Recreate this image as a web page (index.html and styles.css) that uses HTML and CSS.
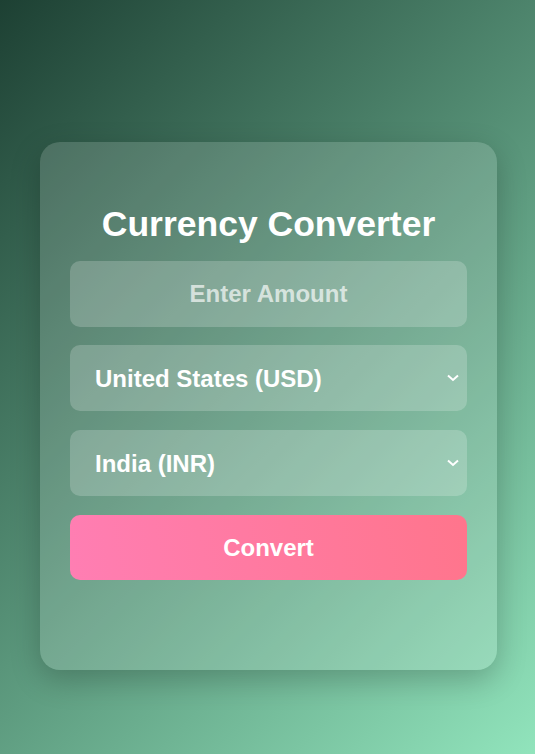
FILE: index.html
```html
<!DOCTYPE html>
<html lang="en">
<head>
<meta charset="utf-8">
<title>Currency Converter</title>
<link rel="stylesheet" href="styles.css">
</head>
<body>
<main class="card">
  <h2 class="title">Currency Converter</h2>
  <input class="field amount" type="text" inputmode="decimal" placeholder="Enter Amount">
  <div class="select-wrap first">
    <select class="field select">
      <option>United States (USD)</option>
    </select>
    <svg class="chevron" width="12" height="8" viewBox="0 0 12 8"><polyline points="1,1.5 6,6 11,1.5" fill="none" stroke="#fff" stroke-width="2"/></svg>
  </div>
  <div class="select-wrap">
    <select class="field select">
      <option>India (INR)</option>
    </select>
    <svg class="chevron" width="12" height="8" viewBox="0 0 12 8"><polyline points="1,1.5 6,6 11,1.5" fill="none" stroke="#fff" stroke-width="2"/></svg>
  </div>
  <button class="convert">Convert</button>
</main>
</body>
</html>
```

FILE: styles.css
```css
html, body {
  margin: 0;
  height: 100%;
}
body {
  font-family: "Liberation Sans", Arial, sans-serif;
  background: linear-gradient(135deg, #1d4033 0%, #91e4bc 100%);
  padding: 142px 38px 0 40px;
  box-sizing: border-box;
  overflow: hidden;
}
.card {
  box-sizing: border-box;
  width: 457px;
  height: 528px;
  padding: 62px 30px 0;
  background: rgba(255, 255, 255, 0.15);
  border-radius: 20px;
  box-shadow: 0 10px 30px rgba(0, 0, 0, 0.22);
  display: flex;
  flex-direction: column;
  gap: 19px;
}
.title {
  margin: 0 0 -2px;
  text-align: center;
  color: #fff;
  font-size: 35.5px;
  font-weight: bold;
  line-height: 40px;
}
.field {
  box-sizing: border-box;
  width: 100%;
  height: 66px;
  border: none;
  outline: none;
  border-radius: 10px;
  background: rgba(255, 255, 255, 0.2);
  color: #fff;
  font-family: inherit;
  font-size: 24px;
  font-weight: bold;
  margin: 0;
}
.amount {
  text-align: center;
  padding: 0 20px;
}
.amount::placeholder {
  color: rgba(255, 255, 255, 0.68);
}
.select-wrap {
  position: relative;
}
.select-wrap.first {
  margin-top: -1px;
}
.select {
  appearance: none;
  -webkit-appearance: none;
  padding: 0 40px 0 25px;
  display: block;
}
.chevron {
  position: absolute;
  right: 8px;
  top: 29px;
}
.convert {
  height: 65px;
  border: none;
  border-radius: 10px;
  background: linear-gradient(80deg, #ff7eb3, #ff758c);
  color: #fff;
  font-family: inherit;
  font-size: 24px;
  font-weight: bold;
  margin: 0;
}
```
